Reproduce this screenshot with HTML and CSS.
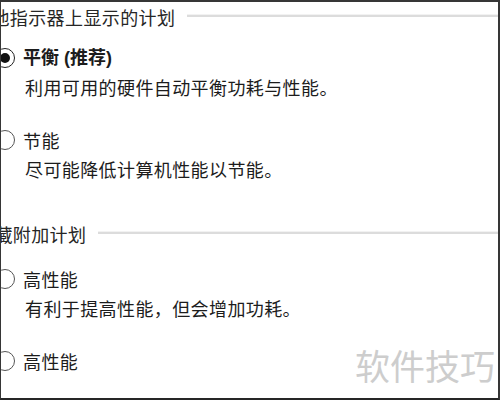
FILE: index.html
```html
<!DOCTYPE html>
<html lang="zh-CN">
    <head>
        <meta charset="UTF-8">
        <title>电源计划</title>
        <link rel="stylesheet" href="styles.css">
    </head>
<body>
    <div class="frame">
        <div class="group">
            <div class="group_head">
                <span class="group_title first">电池指示器上显示的计划</span>
                <span class="rule"></span>
            </div>
            <div class="option">
                <span class="radio checked"></span>
                <div class="option_text">
                    <div class="option_title bold">平衡 (推荐)</div>
                    <div class="option_desc">利用可用的硬件自动平衡功耗与性能。</div>
                </div>
            </div>
            <div class="option">
                <span class="radio"></span>
                <div class="option_text">
                    <div class="option_title">节能</div>
                    <div class="option_desc">尽可能降低计算机性能以节能。</div>
                </div>
            </div>
        </div>

        <div class="group">
            <div class="group_head">
                <span class="group_title second">隐藏附加计划</span>
                <span class="rule"></span>
            </div>
            <div class="option">
                <span class="radio"></span>
                <div class="option_text">
                    <div class="option_title">高性能</div>
                    <div class="option_desc">有利于提高性能，但会增加功耗。</div>
                </div>
            </div>
            <div class="option">
                <span class="radio"></span>
                <div class="option_text">
                    <div class="option_title">高性能</div>
                </div>
            </div>
        </div>

        <!-- watermark sits over the bottom right corner -->
        <div class="watermark">软件技巧</div>
    </div>
</body>
</html>
```

FILE: styles.css
```css
body {
    margin: 0;
    padding: 0;
    background-color: #ffffff;
    font-family: "Noto Sans CJK SC", "Noto Sans", sans-serif;
    color: #1c1c1c;
}

.frame {
    position: relative;
    width: 500px;
    height: 400px;
    box-sizing: border-box;
    overflow: hidden;
    border-top: 2px solid #363636;
    border-left: 1px solid #363636;
    border-right: 2px solid #363636;
    border-bottom: 2px solid #262626;
    padding-top: 3px;
}

.group_head {
    display: flex;
    align-items: center;
    height: 24px;
    margin-bottom: 17px;
}

.group + .group {
    margin-top: 41px;
}

.group + .group .group_head {
    margin-bottom: 21px;
}

.group_title {
    font-size: 18px;
    line-height: 24px;
    letter-spacing: 0.4px;
    color: #262626;
    white-space: nowrap;
}

.group_title.first {
    margin-left: -28px;
}

.group_title.second {
    margin-left: -25px;
}

.rule {
    flex: 1;
    height: 2px;
    margin-left: 12px;
    margin-top: -4px;
    background-color: #dcdcdc;
    border-top: 1px solid #f2f2f2;
}

.option {
    display: flex;
    align-items: flex-start;
    margin-left: -6px;
}

.option + .option {
    margin-top: 29px;
}

.radio {
    flex: none;
    width: 20px;
    height: 20px;
    box-sizing: border-box;
    border: 1.5px solid #555555;
    border-radius: 50%;
    margin-top: 2px;
    margin-right: 8px;
    display: flex;
    align-items: center;
    justify-content: center;
}

.radio.checked {
    border-color: #222222;
}

.radio.checked::after {
    content: "";
    width: 10px;
    height: 10px;
    border-radius: 50%;
    background-color: #111111;
}

.option_title {
    font-size: 18px;
    line-height: 24px;
    letter-spacing: 0.4px;
}

.option_title.bold {
    font-family: "Liberation Sans", "Noto Sans CJK SC", sans-serif;
    font-weight: bold;
    letter-spacing: 0;
}

.option_desc {
    font-size: 18px;
    line-height: 24px;
    letter-spacing: 0.4px;
    margin-top: 5px;
    padding-left: 2px;
}

.watermark {
    position: absolute;
    left: 349px;
    top: 330px;
    right: -2px;
    bottom: -2px;
    background-color: #ffffff;
    padding: 13px 0 0 5px;
    font-size: 35px;
    line-height: 40px;
    color: #cdcdcd;
}
```
